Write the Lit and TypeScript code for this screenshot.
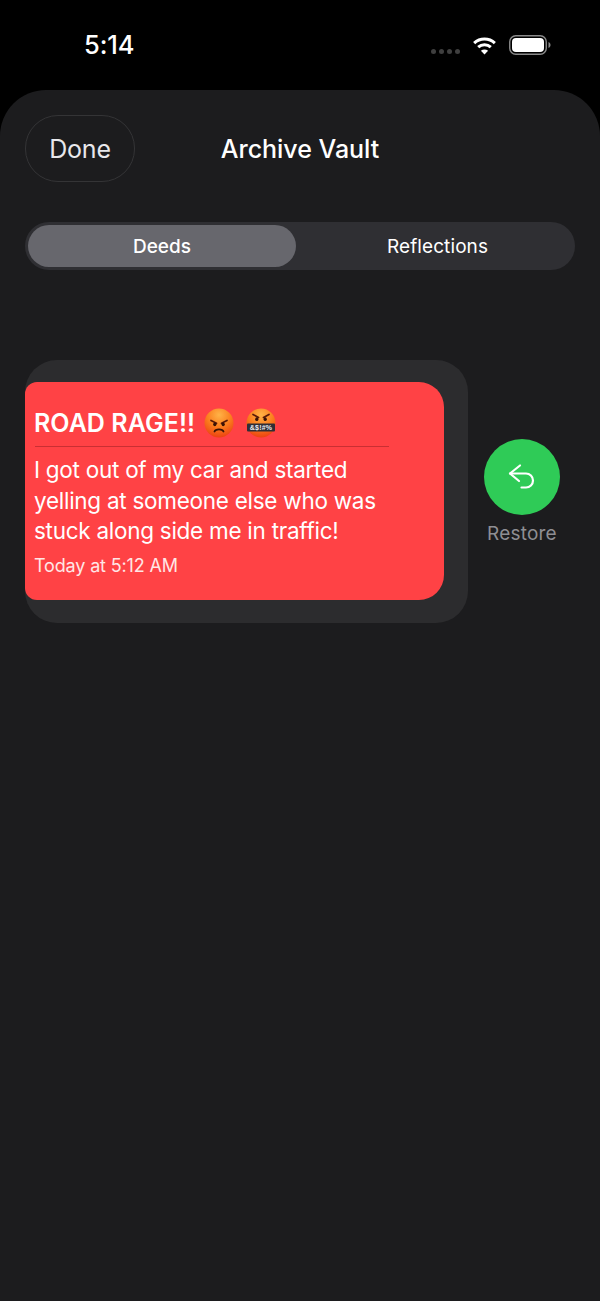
import { LitElement, html, css, svg } from "lit";
import { customElement } from "lit/decorators.js";

const face = (id: string, inner: unknown) => html`<svg class="emoji" viewBox="0 0 30 30" width="30" height="30" aria-hidden="true">
  <defs><radialGradient id=${id} cx="50%" cy="22%" r="82%">
    <stop offset="0%" stop-color="#ffb347"/><stop offset="50%" stop-color="#fb7f1e"/><stop offset="100%" stop-color="#ea3c10"/>
  </radialGradient></defs>
  <circle cx="15" cy="15" r="14.5" fill="url(#${id})"/>${inner}</svg>`;

const angry = svg`
  <path d="M7 12.500l5.500 2.800M23 12.500l-5.500 2.800" stroke="#5a1a08" stroke-width="1.700" stroke-linecap="round"/>
  <ellipse cx="10.800" cy="16.300" rx="1.600" ry="1.900" fill="#3a1206"/><ellipse cx="19.200" cy="16.300" rx="1.600" ry="1.900" fill="#3a1206"/>
  <path d="M10.500 23.500c1-2.800 8-2.800 9 0" fill="none" stroke="#3a1206" stroke-width="1.800" stroke-linecap="round"/>`;
const cursing = svg`
  <path d="M7 6.500l5.500 3M23 6.500l-5.500 3" stroke="#5a1a08" stroke-width="1.700" stroke-linecap="round"/>
  <ellipse cx="10.800" cy="11.200" rx="1.600" ry="1.900" fill="#3a1206"/><ellipse cx="19.200" cy="11.200" rx="1.600" ry="1.900" fill="#3a1206"/>
  <rect x="1" y="15.500" width="28" height="8" rx="1" fill="#2e2e36"/>
  <text x="15" y="22" text-anchor="middle" font-family="Liberation Sans, sans-serif" font-size="7" font-weight="700" letter-spacing="0.200" fill="#ecedf2">&$!#%</text>`;

@customElement("app-root")
export class AppRoot extends LitElement {
  static styles = css`
    :host { display: block; width: 600px; height: 1301px; background: #000; overflow: hidden;
      font-family: Inter, "Liberation Sans", sans-serif; color: #fff; }
    .status { height: 90px; box-sizing: border-box; padding: 0 49px 0 84px; display: flex; justify-content: space-between; }
    .time { font-size: 25.5px; font-weight: 500; line-height: 30px; margin-top: 30px; letter-spacing: -0.1px; }
    .icons { display: flex; align-items: flex-start; gap: 12px; margin-top: 35px; }
    .dots { display: flex; gap: 3px; margin-top: 14px; }
    .dots i { width: 5px; height: 5px; border-radius: 50%; background: #3f3f3f; display: block; }
    .wifi { margin-top: 2px; }
    .sheet { height: 1211px; background: #1c1c1e; border-radius: 46px 46px 0 0; box-sizing: border-box; padding: 25px 25px 0; }
    .nav { position: relative; display: flex; align-items: center; justify-content: center; height: 67px; }
    .done { position: absolute; left: 0; top: 0; width: 110px; height: 67px; box-sizing: border-box;
      border: 1px solid #343436; border-radius: 33px; display: flex; align-items: center; justify-content: center;
      font-size: 25px; color: #e8e8ec; letter-spacing: -0.2px; }
    .title { font-size: 25px; font-weight: 500; letter-spacing: -0.02px; }
    .seg { margin-top: 40px; height: 48px; box-sizing: border-box; padding: 3px; background: #2f2f33; border-radius: 24px; display: flex; }
    .seg div { flex: 1; display: flex; align-items: center; justify-content: center; font-size: 19px; font-weight: 500; border-radius: 21px; }
    .seg .on { flex: 0 0 268px; background: #67676d; }
    .seg .off { padding-left: 7px; letter-spacing: 0.1px; font-weight: 400; }
    .row { display: flex; align-items: center; margin-top: 90px; }
    .well { width: 443px; height: 263px; box-sizing: border-box; background: #2c2c2e; border-radius: 32px; padding: 22px 24px 23px 0; }
    .card { height: 218px; box-sizing: border-box; background: #ff4245; border-radius: 12px 25px 25px 12px; padding: 22px 9px 0; }
    .head { display: flex; align-items: center; height: 37px; font-size: 25px; font-weight: 600; letter-spacing: 0.05px; gap: 9px; }
    .head .emoji + .emoji { margin-left: 3px; }
    .emoji { flex: none; display: block; }
    .rule { width: 354px; height: 1px; background: rgba(120, 20, 25, 0.4); margin-top: 5px; margin-left: 1px; }
    .body { margin: 8px 0 0; font-size: 22.5px; line-height: 30.5px; letter-spacing: -0.27px; color: #fff; }
    .date { margin-top: 7px; font-size: 18px; line-height: 24px; color: #ffe6e6; letter-spacing: -0.15px; }
    .action { flex: 1; display: flex; flex-direction: column; align-items: center; padding-left: 16px; margin-top: 2px; margin-right: -25px; padding-right: 40px; box-sizing: border-box; }
    .btn { width: 76px; height: 76px; border-radius: 50%; background: #2fcb57; display: flex; align-items: center; justify-content: center; }
    .label { margin-top: 7px; font-size: 19px; line-height: 24px; color: #8e8e93; letter-spacing: 0.2px; }
  `;

  render() {
    return html`
      <div class="status">
        <div class="time">5:14</div>
        <div class="icons">
          <div class="dots"><i></i><i></i><i></i><i></i></div>
          <svg class="wifi" width="25" height="18" viewBox="0 0 26 20" aria-hidden="true">
            <path d="M1.500 6.800C8 .8 18 .8 24.500 6.800" fill="none" stroke="#fff" stroke-width="3.400"/>
            <path d="M6 11.300c4-3.600 10-3.600 14 0" fill="none" stroke="#fff" stroke-width="3.400"/>
            <path d="M13 19.500l-4-4.300c2.300-1.800 5.700-1.800 8 0z" fill="#fff"/>
          </svg>
          <svg width="42" height="20" viewBox="0 0 42 20" aria-hidden="true">
            <rect x="0.750" y="0.750" width="36.500" height="18.500" rx="6" fill="none" stroke="#8a8a8a" stroke-width="1.400"/>
            <rect x="3" y="3" width="32" height="14" rx="4" fill="#fff"/>
            <path d="M39.500 7v6c1.200-.5 2-1.700 2-3s-.8-2.500-2-3z" fill="#8a8a8a"/>
          </svg>
        </div>
      </div>
      <div class="sheet">
        <div class="nav">
          <div class="done">Done</div>
          <div class="title">Archive Vault</div>
        </div>
        <div class="seg">
          <div class="on">Deeds</div>
          <div class="off">Reflections</div>
        </div>
        <div class="row">
          <div class="well">
            <div class="card">
              <div class="head"><span>ROAD RAGE!!</span>${face("a", angry)}${face("b", cursing)}</div>
              <div class="rule"></div>
              <p class="body">I got out of my car and started<br />yelling at someone else who was<br />stuck along side me in traffic!</p>
              <div class="date">Today at 5:12 AM</div>
            </div>
          </div>
          <div class="action">
            <div class="btn">
              <svg width="32" height="32" viewBox="0 0 32 32" fill="none" stroke="#fff" stroke-width="2.200" stroke-linecap="round" stroke-linejoin="round" aria-hidden="true">
                <path d="M14 4.500L4 12.500l9 7.500"/>
                <path d="M4 12.500h16a7 7 0 0 1 0 14h-4.500"/>
              </svg>
            </div>
            <div class="label">Restore</div>
          </div>
        </div>
      </div>
    `;
  }
}
